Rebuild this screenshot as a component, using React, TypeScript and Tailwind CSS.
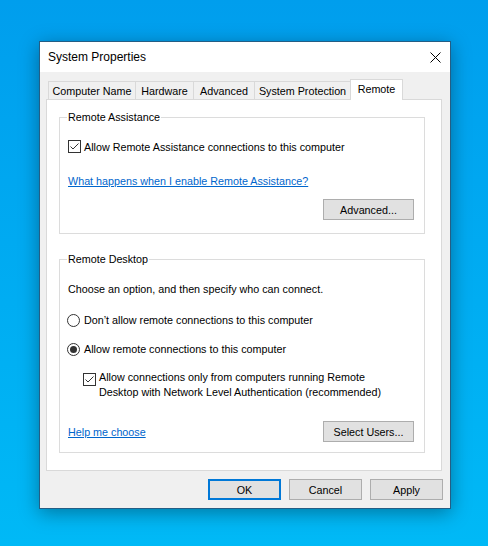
import React from "react";

const font = { fontFamily: '"Liberation Sans", Arial, sans-serif' };

function CheckBox() {
  return (
    <div className="w-[13px] h-[13px] border border-[#333333] bg-white shrink-0 flex items-center justify-center">
      <svg width="11" height="11" viewBox="0 0 11 11">
        <path d="M1.5 5.5 L4 8 L9.5 2.5" fill="none" stroke="#333333" strokeWidth="1" />
      </svg>
    </div>
  );
}

function Radio({ checked }: { checked?: boolean }) {
  return (
    <div className="w-[13px] h-[13px] rounded-full border border-[#333333] bg-white shrink-0 flex items-center justify-center">
      {checked ? <div className="w-[7px] h-[7px] rounded-full bg-[#333333]" /> : null}
    </div>
  );
}

function Btn({ label, def }: { label: string; def?: boolean }) {
  return (
    <div
      className={
        "w-[73px] h-[21px] flex items-center justify-center bg-[#e1e1e1] text-[10.75px] leading-[14px] text-black " +
        (def ? "border-2 border-[#0078d7]" : "border border-[#adadad]")
      }
    >
      {label}
    </div>
  );
}

export default function App() {
  return (
    <div
      className="w-[488px] h-[546px] bg-linear-to-b from-[#009eed] to-[#00b9f6] pt-[41px] pl-[39px] overflow-hidden"
      style={font}
    >
      <div className="w-[412px] h-[468px] border border-[#245e85] bg-[#f0f0f0] shadow-[0_4px_18px_rgba(0,0,0,0.35)] flex flex-col">
        {/* title bar */}
        <div className="h-[30px] bg-white flex items-center justify-between pl-[8px] pr-[9px]">
          <span className="text-[12px] leading-[16px] text-black">System Properties</span>
          <svg width="11" height="11" viewBox="0 0 11 11">
            <path d="M0.5 0.5 L10.5 10.5 M10.5 0.5 L0.5 10.5" stroke="#000" strokeWidth="1" fill="none" />
          </svg>
        </div>

        {/* body */}
        <div className="pt-[7px] flex flex-col">
          {/* tabs */}
          <div className="h-[20px] flex items-end pl-[8px] text-[10.75px] leading-[14px] text-black">
            <div className="w-[87px] h-[18px] border-l border-t border-[#d9d9d9] flex items-center justify-center">Computer Name</div>
            <div className="w-[58px] h-[18px] border-l border-t border-[#d9d9d9] flex items-center justify-center">Hardware</div>
            <div className="w-[61px] h-[18px] border-l border-t border-[#d9d9d9] flex items-center justify-center">Advanced</div>
            <div className="w-[96px] h-[18px] border-l border-t border-[#d9d9d9] flex items-center justify-center">System Protection</div>
            <div className="w-[53px] h-[21px] -mb-px relative z-10 bg-white border-l border-t border-r border-[#d9d9d9] flex items-center justify-center pb-[3px]">Remote</div>
          </div>

          {/* panel */}
          <div className="ml-[6px] w-[396px] h-[372px] border border-[#d9d9d9] bg-white flex flex-col text-[10.75px] leading-[14px] text-black">
            {/* Remote Assistance */}
            <div className="relative ml-[12px] mt-[17px] w-[366px] h-[117px] border border-[#dcdcdc] flex flex-col">
              <span className="absolute -top-[8px] left-[7px] px-[1px] bg-white">Remote Assistance</span>
              <div className="mt-[22px] pl-[8px] flex items-center h-[13px] gap-[3px]">
                <CheckBox />
                <span>Allow Remote Assistance connections to this computer</span>
              </div>
              <div className="mt-[21px] pl-[8px]">
                <span className="text-[#0066cc] underline">What happens when I enable Remote Assistance?</span>
              </div>
              <div className="mt-[11px] pr-[10px] flex justify-end">
                <div className="w-[91px] h-[21px] border border-[#adadad] bg-[#e1e1e1] flex items-center justify-center">Advanced...</div>
              </div>
            </div>

            {/* Remote Desktop */}
            <div className="relative ml-[12px] mt-[25px] w-[366px] h-[194px] border border-[#dcdcdc] flex flex-col">
              <span className="absolute -top-[8px] left-[7px] px-[1px] bg-white">Remote Desktop</span>
              <div className="mt-[22px] pl-[8px]">Choose an option, and then specify who can connect.</div>
              <div className="mt-[17px] pl-[7px] h-[14px] flex items-center gap-[4px]">
                <Radio />
                <span>Don’t allow remote connections to this computer</span>
              </div>
              <div className="mt-[15px] pl-[7px] h-[14px] flex items-center gap-[4px]">
                <Radio checked />
                <span>Allow remote connections to this computer</span>
              </div>
              <div className="mt-[14px] pl-[23px] flex items-start gap-[3px]">
                <div className="mt-[3px]">
                  <CheckBox />
                </div>
                <span className="leading-[15px]">
                  Allow connections only from computers running Remote
                  <br />
                  Desktop with Network Level Authentication (recommended)
                </span>
              </div>
              <div className="mt-[21px] pl-[8px] pr-[10px] h-[21px] flex items-center justify-between">
                <span className="text-[#0066cc] underline">Help me choose</span>
                <div className="w-[91px] h-[21px] border border-[#adadad] bg-[#e1e1e1] flex items-center justify-center">Select Users...</div>
              </div>
            </div>
          </div>

          {/* bottom buttons */}
          <div className="mt-[8px] pr-[7px] flex justify-end gap-[8px]">
            <Btn label="OK" def />
            <Btn label="Cancel" />
            <Btn label="Apply" />
          </div>
        </div>
      </div>
    </div>
  );
}
